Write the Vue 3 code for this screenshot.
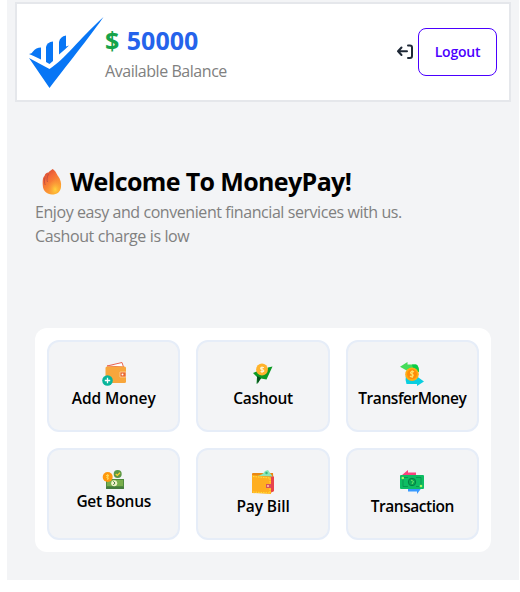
<script setup>
const actions = [
  { id: 'add', label: 'Add Money' },
  { id: 'cashout', label: 'Cashout' },
  { id: 'transfer', label: 'TransferMoney' },
  { id: 'bonus', label: 'Get Bonus' },
  { id: 'bill', label: 'Pay Bill' },
  { id: 'transaction', label: 'Transaction' },
]
</script>

<template>
  <main class="page">
    <header class="header">
      <svg class="logo" viewBox="0 0 76 72" fill="#0876f5">
        <path d="M1 41 21.500 52C37 42 50 23 75.500 0 66 14 43 43 21.500 71Z" />
        <path d="M1 37Q4 36.500 5 34.500 8 30.500 13 30.500V42.500Q6 39 1 37Z" />
        <path d="M18 45V30Q19 25 25 24.500V44L21.500 47Z" />
        <path d="M31 37.500V25Q32 19.500 38 18.500V29.500L41 28.500Q36 33.500 31 37.500Z" />
      </svg>
      <div class="balance">
        <div class="amount"><span class="dollar">$</span> <span class="value">50000</span></div>
        <div class="caption">Available Balance</div>
      </div>
      <svg class="exit" viewBox="0 0 18 16" fill="none" stroke="#1f2937" stroke-width="2" stroke-linecap="round" stroke-linejoin="round">
        <path d="M12 1.500H14Q16 1.500 16 3.500V12Q16 14 14 14H12M2 7.300H11M5.500 3.500 2 7.300 5.500 11" />
      </svg>
      <button class="logout"><span>Logout</span></button>
    </header>

    <section class="welcome">
      <h1>
        <svg class="flame" viewBox="0 0 20 26">
          <defs>
            <linearGradient id="fire" x1="0" y1="0" x2=".6" y2="1">
              <stop offset="0" stop-color="#c93e32" /><stop offset=".4" stop-color="#f46a38" /><stop offset="1" stop-color="#ffb02e" />
            </linearGradient>
            <radialGradient id="glow" cx=".6" cy=".75" r=".7">
              <stop offset="0" stop-color="#ffd43b" /><stop offset="1" stop-color="#f8773d" stop-opacity="0" />
            </radialGradient>
          </defs>
          <path d="M10.500 0C14 2 14.500 5 16 7 18.500 10 19.500 14 19 18 18.500 23 15 25.500 10 25.500S1 22 .8 16.500C.5 11 1 8 2.500 7 3 5 4.500 3.500 6.500 3.500 7.500 1.500 9 2 10.500 0Z" fill="url(#fire)" />
          <path d="M14.500 7C18 11 19 14 18.500 18S15 25 10 25 4 20 6 16 13 12 14.500 7Z" fill="url(#glow)" />
          <path d="M3 8.500C2 12 2.500 14 3.200 16M6.500 5C4.500 9 5 11 5.500 13" fill="none" stroke="#b94942" stroke-width=".8" />
        </svg>
        <span class="title">Welcome To MoneyPay!</span>
      </h1>
      <p><span class="first">Enjoy easy and convenient financial services with us.</span><br><span class="second">Cashout charge is low</span></p>
    </section>

    <section class="panel">
      <button v-for="a in actions" :key="a.id" class="tile" :class="a.id">
        <svg v-if="a.id === 'add'" class="icon" viewBox="0 0 24 24">
          <path d="M5 4 20 .5 21.500 5Z" fill="#fff" stroke="#e96450" />
          <rect x="3.500" y="4.500" width="20.500" height="16.500" rx="1.500" fill="#f8a63c" />
          <path d="M18 10h6v5h-6Z" fill="#e96832" stroke="#ffd09a" stroke-width=".8" />
          <circle cx="20.500" cy="12.500" r="1" fill="#fff" />
          <circle cx="5.500" cy="18.500" r="5.300" fill="#08b59b" />
          <path d="M5.500 15.800v5.400M2.800 18.500h5.400" stroke="#fff" stroke-width="1.300" />
        </svg>
        <svg v-else-if="a.id === 'cashout'" class="icon" viewBox="0 0 24 24">
          <path d="M2 11 7 9 14 12 17 5.500 21.500 4.500 15.500 17.500 10 16.500 5.500 22 6 15Z" fill="#0c9a24" />
          <path d="M6 14 10 16 6.500 22Z" fill="#064f1c" />
          <circle cx="11" cy="7.500" r="5.900" fill="#ffb32c" />
          <path d="M13 5.500H10Q9 7 11 7.500 13.500 8 12.500 9.500H9.500M11 4.500V11" fill="none" stroke="#fff4d0" stroke-width="1.200" />
        </svg>
        <svg v-else-if="a.id === 'transfer'" class="icon" viewBox="0 0 24 24">
          <path d="M0 4.700 7.500 0V2.500H16Q19 3.500 19 10H14L7.500 7.500V9Z" fill="#44dc59" />
          <path d="M12 2.500H16Q19 3.500 19 10H14Z" fill="#09cc47" />
          <path d="M6 12Q5 18 6.500 22H17V24L24 19.500 17 14.500V17L12 18Z" fill="#09cee0" />
          <circle cx="12" cy="12.200" r="6.800" fill="#ffac13" />
          <circle cx="12" cy="12.200" r="4.900" fill="#ff8c08" />
          <path d="M14 10Q12 8.500 10.500 10.500 10.500 12 12.300 12.200 14 13 12.700 14.500 11.300 15.300 10 14M12.200 8.300V16" fill="none" stroke="#ffe26b" stroke-width="1.100" />
        </svg>
        <svg v-else-if="a.id === 'bonus'" class="icon" viewBox="0 0 24 24">
          <rect x="4" y="9" width="18" height="10" rx=".5" fill="#457c3c" />
          <rect x="4.500" y="9.500" width="17" height="7" fill="#79ae4c" stroke="#508b3e" />
          <circle cx="12.200" cy="13.200" r="3" fill="#eff2c9" />
          <path d="M11.300 11.300 13 13 11.300 15" stroke="#487d3d" fill="none" />
          <circle cx="5.700" cy="7" r="5" fill="#ff980e" />
          <path d="M5.700 4V10M4 5.500H7L4.500 7.300 7 8.500" stroke="#ffd85b" fill="none" />
          <circle cx="15.700" cy="4" r="4" fill="#5c9846" />
          <path d="M13.700 4 15.300 5.400 18 2.700" fill="none" stroke="#ffd331" stroke-width="1.300" />
        </svg>
        <svg v-else-if="a.id === 'bill'" class="icon" viewBox="0 0 24 24">
          <path d="M1 4Q1 3 2 3L22 3 23 21 19 23 2 21Z" fill="#ea8811" />
          <path d="M19 6.500H23V21L19 23Z" fill="#e9434c" />
          <path d="M6 6Q12 5 14 1L17 0 21.500 6.500Z" fill="#8ce5b7" />
          <circle cx="15.500" cy="3" r="1.200" fill="#35b482" />
          <path d="M1 5 20 7V24L1 23Z" fill="#ffae20" />
          <path d="M2 6.500 19 8V23L2 22" fill="none" stroke="#ffe13b" stroke-dasharray="1.500 1" />
          <path d="M15 14h5v4h-5Z" fill="#d55161" />
          <circle cx="17" cy="16" r="1" fill="#ffc9b5" />
        </svg>
        <svg v-else class="icon" viewBox="0 0 24 24">
          <path d="M2 5 8 0V2.500H16V7Z" fill="#fb427e" />
          <path d="M8 18H21.500L17 24V21.500H8Z" fill="#3899ff" />
          <rect y="5" width="24" height="14" rx="1" fill="#0ebd63" />
          <path d="M3 7.500H8M16 7.500H21V15.500M3 9V16.500H8M16 16.500H19" fill="none" stroke="#07884b" stroke-width=".7" />
          <circle cx="12" cy="12" r="3.700" fill="#08a852" stroke="#057d45" />
          <path d="M11 10 13.500 11.500 12 14" fill="none" stroke="#76e56c" />
          <circle cx="2.800" cy="8" r="1.300" fill="#a3fb63" /><circle cx="21" cy="16" r="1.300" fill="#a3fb63" />
        </svg>
        <span class="label">{{ a.label }}</span>
      </button>
    </section>
  </main>
</template>

<style>
body { margin: 0; background: #fff; }
</style>

<style scoped>
* { box-sizing: border-box; }
.page { width: 512px; height: 580px; margin-left: 7px; padding: 2px 8px 0; background: #f3f4f6; font-family: "Open Sans", "Noto Sans", sans-serif; }
.header { display: flex; height: 100px; align-items: center; padding: 0 12px 0 11px; border: 2px solid #e5e7eb; background: #fff; }
.logo { width: 76px; height: 72px; margin-top: 1px; flex: none; }
.balance { margin: 3px 0 0 1px; flex: 1; }
.amount { font-size: 25px; line-height: 30px; font-weight: 700; color: #2563eb; white-space: nowrap; }
.dollar { color: #16a34a; }
.value { margin-left: 1px; }
.caption { margin-top: 4px; font-size: 16px; line-height: 24px; color: #808080; letter-spacing: -.45px; white-space: nowrap; }
.exit { width: 18px; height: 16px; margin-right: 4px; }
button { font-family: inherit; }
.logout { width: 79px; height: 48px; padding: 0; border: 1px solid #4b00ff; border-radius: 8px; background: #fff; color: #4b00ff; font-size: 14px; line-height: 14px; font-weight: 600; letter-spacing: -.2px; }
.welcome { height: 226px; padding: 64px 20px 0; }
h1 { display: flex; align-items: center; height: 32px; margin: 0; padding-left: 7px; font-size: 25px; font-weight: 700; color: #000; letter-spacing: -.63px; white-space: nowrap; }
.title { line-height: 30px; padding-bottom: 2px; }
.flame { width: 20px; height: 26px; margin-right: 8px; }
p { margin: 2px 0 0; font-size: 16px; line-height: 24px; color: #808080; white-space: nowrap; letter-spacing: -.43px; }
.second { letter-spacing: -.38px; }
.panel { display: grid; grid-template-columns: repeat(3, 1fr); grid-auto-rows: 92px; gap: 16px; width: 456px; margin-left: 20px; padding: 12px; border-radius: 12px; background: #fff; }
.tile { display: flex; flex-direction: column; align-items: center; padding: 20px 0 0; border: 2px solid #e6edf8; border-radius: 12px; background: #f3f4f6; color: #000; }
.icon { width: 24px; height: 24px; flex: none; }
.label { font-size: 15.5px; line-height: 24px; font-weight: 600; letter-spacing: -.3px; white-space: nowrap; }
.add .label { letter-spacing: -.05px; }
.bonus .label { margin-top: -5px; }
.bill .label { letter-spacing: -.1px; }
.transfer .label, .transaction .label { letter-spacing: -.45px; }
</style>
